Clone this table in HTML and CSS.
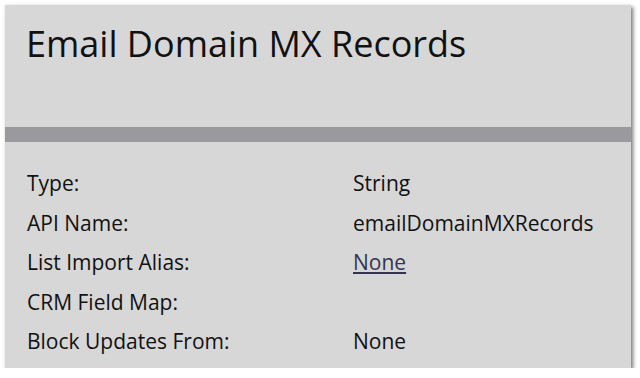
FILE: index.html
```html
<!DOCTYPE html>
<html>
<head>
<meta charset="utf-8">
<link rel="stylesheet" href="styles.css">
</head>
<body>
<div class="card">
  <div class="card-header">
    <h1 class="title">Email Domain MX Records</h1>
  </div>
  <div class="divider"></div>
  <div class="card-body">
    <div class="row"><span class="label">Type:</span><span class="value">String</span></div>
    <div class="row"><span class="label">API Name:</span><span class="value">emailDomainMXRecords</span></div>
    <div class="row"><span class="label">List Import Alias:</span><span class="value"><a class="link" href="#">None</a></span></div>
    <div class="row"><span class="label">CRM Field Map:</span><span class="value"></span></div>
    <div class="row"><span class="label">Block Updates From:</span><span class="value">None</span></div>
  </div>
</div>
</body>
</html>
```

FILE: styles.css
```css
html, body {
  margin: 0;
  padding: 0;
  background: #ffffff;
}
body {
  font-family: "Open Sans", "DejaVu Sans", sans-serif;
  color: #111111;
}
.card {
  margin: 5px 0 0 5px;
  width: 626px;
  height: 363px;
  background: #d7d7d7;
  box-shadow: 2px 2px 4px rgba(0, 0, 0, 0.55);
  display: flex;
  flex-direction: column;
}
.card-header {
  height: 122px;
  box-sizing: border-box;
  padding: 16px 0 0 21px;
}
.title {
  margin: 0;
  font-size: 36px;
  font-weight: 400;
  line-height: 45px;
}
.divider {
  height: 15px;
  background: #9a999e;
}
.card-body {
  padding: 22px 0 0 22px;
  display: flex;
  flex-direction: column;
}
.row {
  display: grid;
  grid-template-columns: 326px 1fr;
  font-size: 21px;
  line-height: 39.6px;
}
.link {
  color: #34344e;
  text-decoration: underline;
}
```
